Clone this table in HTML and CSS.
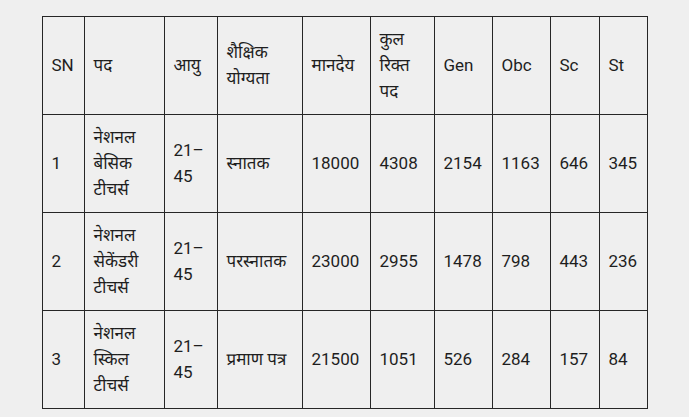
FILE: index.html
```html
<!DOCTYPE html>
<html lang="hi">
<head>
<meta charset="utf-8">
<title>भर्ती तालिका</title>
<link rel="stylesheet" href="styles.css">
</head>
<body>
<table class="posts">
  <colgroup>
    <col class="c-sn"><col class="c-pad"><col class="c-age"><col class="c-edu"><col class="c-pay"><col class="c-total"><col class="c-gen"><col class="c-obc"><col class="c-sc"><col class="c-st">
  </colgroup>
  <thead>
    <tr>
      <th>SN</th><th>पद</th><th>आयु</th><th>शैक्षिक योग्यता</th><th>मानदेय</th><th>कुल रिक्त पद</th><th>Gen</th><th>Obc</th><th>Sc</th><th>St</th>
    </tr>
  </thead>
  <tbody>
    <tr>
      <td>1</td><td>नेशनल बेसिक टीचर्स</td><td>21–45</td><td>स्नातक</td><td>18000</td><td>4308</td><td>2154</td><td>1163</td><td>646</td><td>345</td>
    </tr>
    <tr>
      <td>2</td><td>नेशनल सेकेंडरी टीचर्स</td><td>21–45</td><td>परस्नातक</td><td>23000</td><td>2955</td><td>1478</td><td>798</td><td>443</td><td>236</td>
    </tr>
    <tr>
      <td>3</td><td>नेशनल स्किल टीचर्स</td><td>21–45</td><td>प्रमाण पत्र</td><td>21500</td><td>1051</td><td>526</td><td>284</td><td>157</td><td>84</td>
    </tr>
  </tbody>
</table>
</body>
</html>
```
FILE: styles.css
```css
html, body {
  margin: 0;
  padding: 0;
  background: #efefef;
}
body {
  padding-top: 16px;
  font-family: Roboto, "Noto Sans Devanagari", "Noto Sans", sans-serif;
  font-size: 17px;
  line-height: 26px;
  color: #1e1e1e;
}
.posts {
  margin: 0 auto;
  width: 606px;
  table-layout: fixed;
  border-collapse: collapse;
  border: 1px solid #262626;
}
.posts th,
.posts td {
  border: 1px solid #262626;
  padding: 9px 9px 10px 9px;
  text-align: left;
  vertical-align: middle;
  font-weight: normal;
  height: 78px;
  box-sizing: content-box;
  word-wrap: break-word;
}
.c-sn { width: 42px; }
.c-pad { width: 80px; }
.c-age { width: 53px; }
.c-edu { width: 85px; }
.c-pay { width: 68px; }
.c-total { width: 64px; }
.c-gen { width: 58px; }
.c-obc { width: 58px; }
.c-sc { width: 49px; }
.c-st { width: 48px; }
```
